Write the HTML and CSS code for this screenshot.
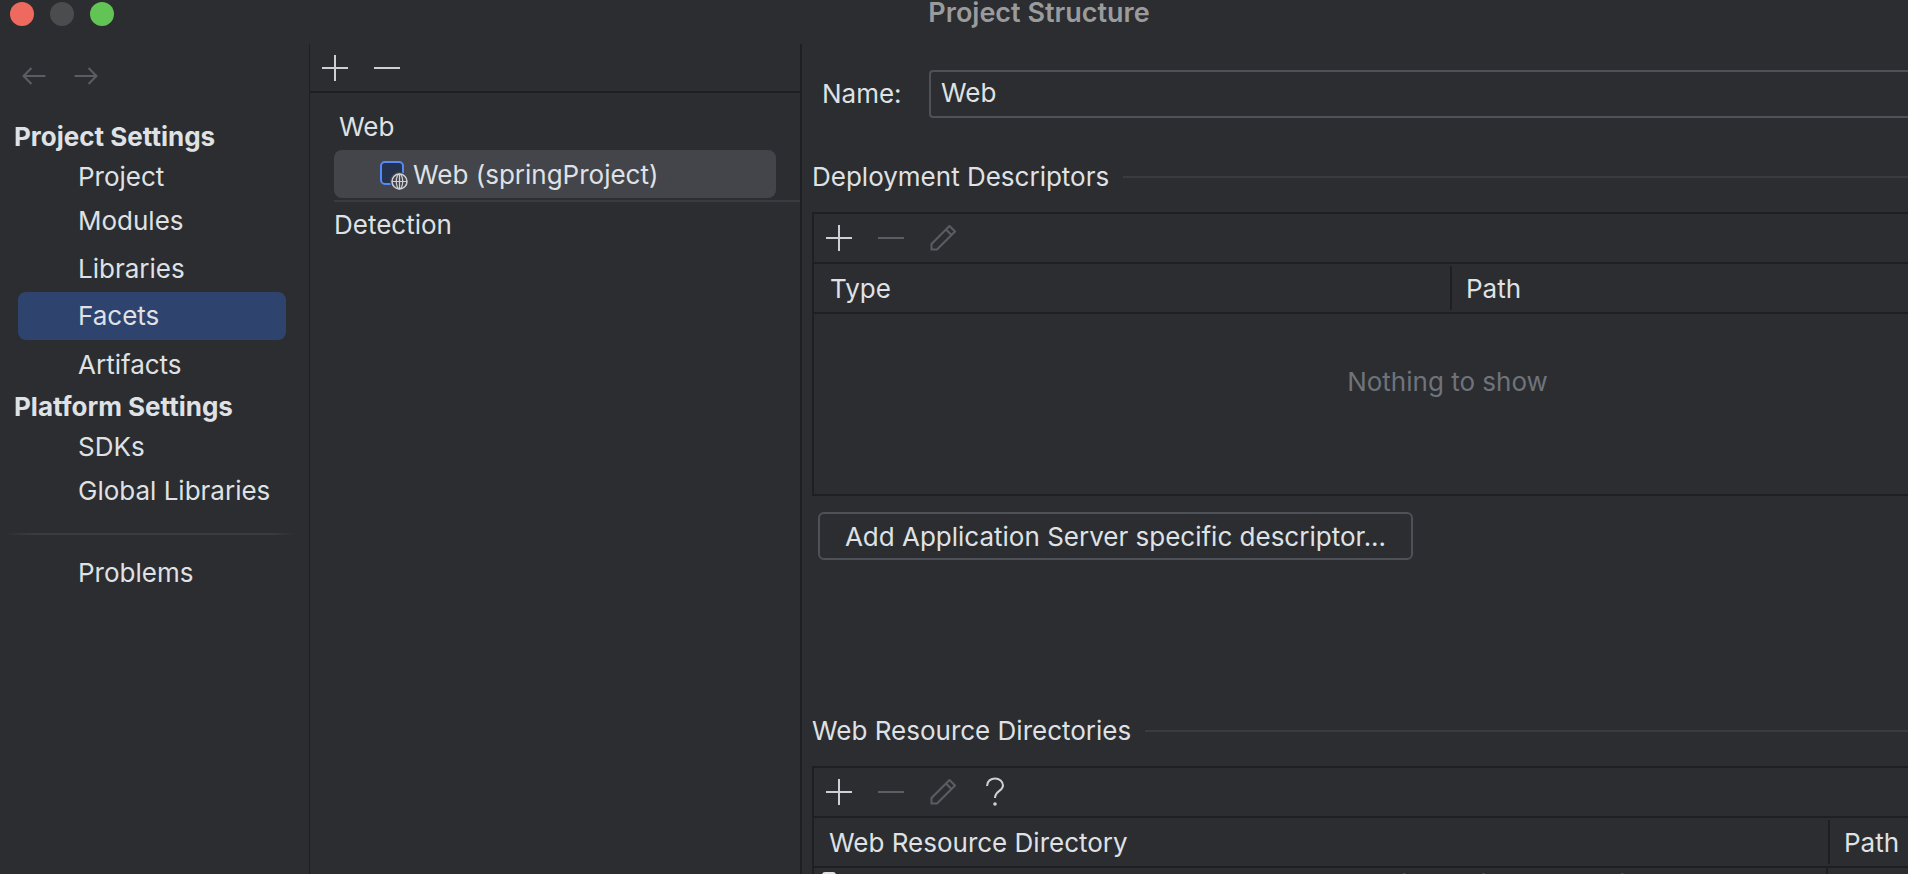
FILE: index.html
```html
<!DOCTYPE html>
<html lang="en">
<head>
<meta charset="utf-8">
<title>Project Structure</title>
<link rel="stylesheet" href="styles.css">
</head>
<body>
<div class="window">
  <header class="titlebar">
    <div class="lights"><span class="light red"></span><span class="light gray"></span><span class="light green"></span></div>
    <div class="title">Project Structure</div>
  </header>
  <div class="columns">
    <nav class="nav">
      <div class="history">
        <svg class="ico" width="24" height="20" viewBox="0 0 24 20"><path d="M23.500 10H1.500M9.500 2L1.500 10L9.500 18" class="stroke-dim"/></svg>
        <svg class="ico" width="24" height="20" viewBox="0 0 24 20"><path d="M.5 10H22.500M14.500 2L22.500 10L14.500 18" class="stroke-dim"/></svg>
      </div>
      <div class="nav-head first">Project Settings</div>
      <div class="nav-item n-project">Project</div>
      <div class="nav-item n-modules">Modules</div>
      <div class="nav-item n-libraries">Libraries</div>
      <div class="nav-item selected">Facets</div>
      <div class="nav-item n-artifacts">Artifacts</div>
      <div class="nav-head second">Platform Settings</div>
      <div class="nav-item n-sdks">SDKs</div>
      <div class="nav-item n-global">Global Libraries</div>
      <div class="nav-sep"></div>
      <div class="nav-item n-problems">Problems</div>
    </nav>
    <section class="facets">
      <div class="tools facets-tools">
        <svg class="ico" width="26" height="26" viewBox="0 0 26 26"><path d="M13 0V26M0 13H26" class="stroke"/></svg>
        <svg class="ico" width="26" height="26" viewBox="0 0 26 26"><path d="M0 13H26" class="stroke"/></svg>
      </div>
      <div class="tree">
        <div class="tree-group">Web</div>
        <div class="tree-row">
          <svg class="facet-ico" width="26" height="26" viewBox="0 0 26 26">
            <rect x="1" y="1" width="22" height="22" rx="4" fill="#25324d" stroke="#548af7" stroke-width="2"/>
            <circle cx="19.500" cy="20.500" r="9.500" fill="#43454a"/>
            <circle cx="19.500" cy="20.500" r="7.500" fill="none" stroke="#ced0d6" stroke-width="1.500"/>
            <ellipse cx="19.500" cy="20.500" rx="3.200" ry="7.500" fill="none" stroke="#ced0d6" stroke-width="1.200"/>
            <path d="M12 20.500H27M19.500 13V28" fill="none" stroke="#ced0d6" stroke-width="1.200"/>
          </svg>
          <span>Web (springProject)</span>
        </div>
        <div class="tree-sep"></div>
        <div class="tree-detect">Detection</div>
      </div>
    </section>
    <main class="detail">
      <div class="name-row">
        <label class="name-label">Name:</label>
        <div class="name-input">Web</div>
      </div>
      <div class="legend first-legend"><span>Deployment Descriptors</span><i></i></div>
      <div class="table t-deploy">
        <div class="tools table-tools">
          <svg class="ico" width="26" height="26" viewBox="0 0 26 26"><path d="M13 0V26M0 13H26" class="stroke"/></svg>
          <svg class="ico" width="26" height="26" viewBox="0 0 26 26"><path d="M0 13H26" class="stroke-dim"/></svg>
          <svg class="ico" width="26" height="26" viewBox="0 0 26 26"><path d="M1.500 24.500V19L17.500 3L19.500 1L25 6.500L7 24.500ZM16 4.500L21.500 10" class="stroke-dim"/></svg>
        </div>
        <div class="thead">
          <div class="th type-col">Type</div>
          <div class="th path-col">Path</div>
        </div>
        <div class="empty">Nothing to show</div>
      </div>
      <button class="btn">Add Application Server specific descriptor...</button>
      <div class="legend second-legend"><span>Web Resource Directories</span><i></i></div>
      <div class="table t-web">
        <div class="tools table-tools">
          <svg class="ico" width="26" height="26" viewBox="0 0 26 26"><path d="M13 0V26M0 13H26" class="stroke"/></svg>
          <svg class="ico" width="26" height="26" viewBox="0 0 26 26"><path d="M0 13H26" class="stroke-dim"/></svg>
          <svg class="ico" width="26" height="26" viewBox="0 0 26 26"><path d="M1.500 24.500V19L17.500 3L19.500 1L25 6.500L7 24.500ZM16 4.500L21.500 10" class="stroke-dim"/></svg>
          <svg class="ico" width="26" height="30" viewBox="0 0 26 30"><path d="M5 9C5 4 9 1.500 13 1.500C17.500 1.500 21 4.500 21 8.500C21 14 13 14 13 21" class="stroke"/><circle cx="13" cy="27" r="1.800" fill="#ced0d6"/></svg>
        </div>
        <div class="thead">
          <div class="th wrd-col">Web Resource Directory</div>
          <div class="th path-col">Path</div>
        </div>
        <div class="trow">
          <div class="tcell dir-cell">
            <svg class="folder" width="14" height="20" viewBox="0 0 14 20"><rect x="0" y="0" width="14" height="20" rx="3" fill="#dfe1e5"/></svg>
            <span>/Users/username/Documents/workspace/springProject/src/main/webapp</span>
          </div>
          <div class="tcell path-cell">/</div>
        </div>
      </div>
    </main>
  </div>
</div>
</body>
</html>
```
FILE: styles.css
```css
html, body { margin: 0; height: 100%; overflow: hidden; background: #2b2d30; }
body { font-family: Inter, "Liberation Sans", sans-serif; font-size: 26px; color: #dfe1e5; }
.window { height: 874px; width: 2078px; display: flex; flex-direction: column; overflow: hidden; }
.titlebar { height: 44px; flex: none; position: relative; }
.lights { display: flex; gap: 16px; padding: 2px 0 0 10px; }
.light { width: 24px; height: 24px; border-radius: 50%; }
.red { background: #ee6a5f; }
.gray { background: #4b4c4e; }
.green { background: #61c454; }
.title { position: absolute; left: 0; right: 0; top: 0; text-align: center; font-size: 27px; font-weight: 600; line-height: 26px; color: #9a9b9d; }
.columns { flex: 1; display: flex; min-height: 0; }
.nav { width: 309px; flex: none; border-right: 1px solid #1e1f22; display: flex; flex-direction: column; }
.history { display: flex; gap: 28px; padding: 22px 0 0 22px; height: 40px; flex: none; }
.ico { display: block; flex: none; }
.stroke, .stroke-dim { fill: none; stroke-width: 2; }
.stroke { stroke: #ced0d6; }
.stroke-dim { stroke: #5a5d63; }
.nav-head { font-weight: 700; padding-left: 14px; line-height: 30px; flex: none; }
.nav-head.first { margin-top: 16px; }
.nav-item { padding-left: 78px; line-height: 30px; flex: none; }
.n-project { margin-top: 10px; }
.n-modules { margin-top: 14px; }
.n-libraries { margin-top: 18px; }
.nav-item.selected { margin: 8px 23px 0 18px; padding: 9px 0 9px 60px; border-radius: 8px; background: #2e436e; }
.n-artifacts { margin-top: 10px; }
.nav-head.second { margin-top: 12px; }
.n-sdks { margin-top: 10px; }
.n-global { margin-top: 14px; }
.nav-sep { height: 2px; margin: 27px 14px 0 6px; flex: none; background: linear-gradient(90deg, transparent, #393b40 8%, #393b40 92%, transparent); }
.n-problems { margin-top: 23px; }
.facets { width: 490px; flex: none; border-right: 2px solid #1e1f22; }
.tools { display: flex; align-items: center; flex: none; }
.facets-tools { height: 47px; padding-left: 12px; gap: 26px; border-bottom: 2px solid #1e1f22; }
.tree { padding-left: 24px; }
.tree-group { padding: 19px 0 0 5px; line-height: 30px; height: 30px; }
.tree-row { height: 48px; margin: 8px 24px 0 0; border-radius: 8px; background: #43454a; display: flex; align-items: center; padding-left: 46px; gap: 7px; }
.facet-ico { flex: none; overflow: visible; }
.tree-sep { height: 2px; margin-top: 2px; background: #393b40; }
.tree-detect { padding: 8px 0 0; line-height: 30px; }
.detail { flex: 1; min-width: 0; padding-left: 10px; display: flex; flex-direction: column; }
.name-row { display: flex; align-items: center; margin-top: 26px; padding-left: 10px; flex: none; }
.name-label { width: 107px; flex: none; padding-bottom: 2px; }
.name-input { flex: 1; box-sizing: border-box; height: 48px; border: 2px solid #4e5157; border-right: 0; padding-left: 10px; line-height: 42px; border-radius: 4px 0 0 4px; }
.legend { display: flex; align-items: center; gap: 14px; line-height: 30px; flex: none; }
.legend i { flex: 1; height: 2px; background: #393b40; }
.first-legend { margin-top: 44px; }
.table { border: 2px solid #1e1f22; border-right: 0; flex: none; box-sizing: border-box; }
.t-deploy { margin-top: 20px; height: 284px; display: flex; flex-direction: column; }
.table-tools { height: 48px; padding-left: 12px; gap: 26px; border-bottom: 2px solid #1e1f22; }
.thead { height: 48px; border-bottom: 2px solid #1e1f22; display: flex; align-items: center; flex: none; }
.th { line-height: 30px; }
.type-col { width: 638px; padding-left: 16px; flex: none; box-sizing: border-box; border-right: 2px solid #1e1f22; height: 44px; line-height: 46px; }
.wrd-col { width: 1016px; padding-left: 15px; flex: none; box-sizing: border-box; border-right: 2px solid #1e1f22; height: 44px; line-height: 46px; }
.path-col { padding: 2px 0 0 14px; }
.empty { flex: 1; text-align: center; color: #6f737a; padding: 52px 0 0 3px; box-sizing: border-box; }
.btn { align-self: flex-start; flex: none; margin: 16px 0 0 6px; box-sizing: border-box; width: 595px; height: 48px; border: 2px solid #4e5157; border-radius: 6px; background: transparent; color: #dfe1e5; font: inherit; padding: 0; }
.second-legend { margin-top: 156px; }
.t-web { margin-top: 20px; height: 200px; }
.trow { display: flex; line-height: 30px; }
.tcell { box-sizing: border-box; height: 44px; }
.dir-cell { width: 1014px; flex: none; padding: 2px 0 0 8px; border-right: 2px solid #1e1f22; display: flex; gap: 9px; white-space: nowrap; }
.folder { flex: none; margin-top: 2px; }
.path-cell { padding: 2px 0 0 13px; }
```
